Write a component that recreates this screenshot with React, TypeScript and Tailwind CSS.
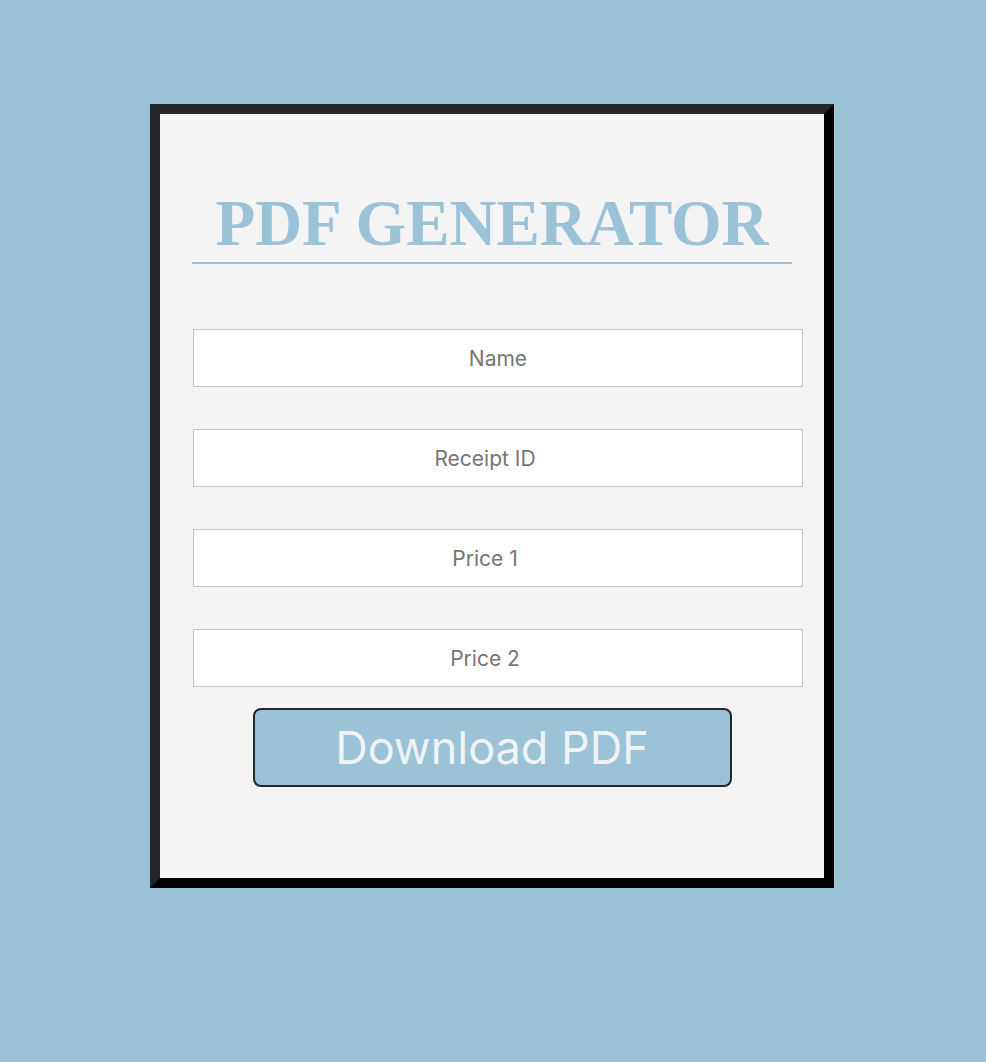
const fields = [
  { placeholder: 'Name', pad: 'pr-0' },
  { placeholder: 'Receipt ID', pad: 'pr-[26px]' },
  { placeholder: 'Price 1', pad: 'pr-[26px]' },
  { placeholder: 'Price 2', pad: 'pr-[26px]' },
];

export default function App() {
  return (
    <div className="min-h-[1062px] w-full bg-[#9cc2d7] pt-[104px] pl-[150px]">
      <div className="w-[684px] h-[784px] bg-[#f4f4f4] border-[10px] border-t-[#23272b] border-l-[#23272b] border-b-black border-r-black px-8">
        <h1 className="mt-[72px] border-b-2 border-[#9cc2d7] pb-[1px] text-center font-['Liberation_Serif',serif] text-[65px] font-bold leading-[75px] text-[#9cc2d7]">
          PDF GENERATOR
        </h1>
        <div className="mt-[65px] flex flex-col gap-[42px] pl-px">
          {fields.map((f) => (
            <input
              key={f.placeholder}
              type="text"
              placeholder={f.placeholder}
              className={`h-[58px] w-[610px] border border-[#c4c4c4] bg-white text-center font-['Inter',sans-serif] text-[21px] text-[#333] placeholder:text-[#767676] outline-none ${f.pad}`}
            />
          ))}
        </div>
        <div className="mt-[21px] flex justify-center">
          <button
            type="button"
            className="h-[79px] w-[479px] rounded-lg border-2 border-[#23272b] bg-[#9cc2d7] font-['Inter',sans-serif] text-[45px] text-[#eef3f6]"
          >
            Download PDF
          </button>
        </div>
      </div>
    </div>
  );
}
